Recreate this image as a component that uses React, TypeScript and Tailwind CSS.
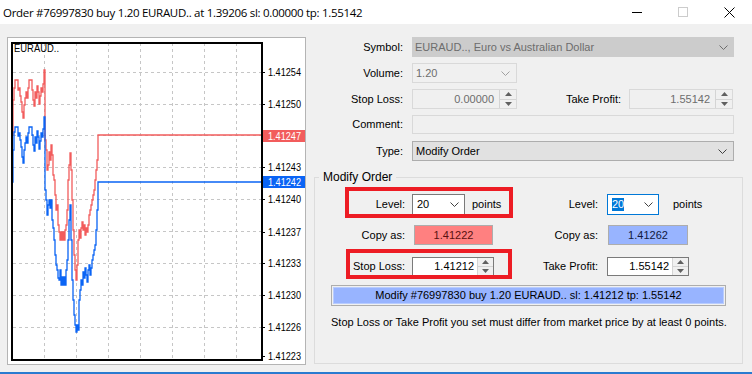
import React from "react";

type Pt = [number, number];

// tick data of the chart, in page pixels
const askTicks: Pt[] = [
  [12, 135], [13, 100], [14, 88], [15, 80], [17, 80], [18, 90], [19, 88], [20, 96], [21, 102], [22, 112],
  [23, 118], [24, 105], [25, 98], [26, 92], [27, 98], [28, 88], [29, 80], [31, 80], [32, 90], [33, 100],
  [34, 106], [35, 92], [36, 98], [37, 86], [38, 92], [39, 104], [40, 96], [41, 88], [42, 92], [43, 84],
  [44, 70], [45, 140], [46, 150], [47, 170], [48, 165], [49, 152], [50, 160], [51, 145], [52, 155], [53, 175],
  [54, 180], [55, 195], [56, 210], [57, 205], [58, 225], [59, 232], [60, 240], [61, 232], [62, 240], [63, 232],
  [64, 240], [65, 230], [66, 225], [67, 210], [68, 180], [69, 165], [70, 153], [71, 170], [72, 200], [73, 230],
  [74, 255], [75, 270], [76, 280], [77, 265], [78, 240], [79, 230], [80, 238], [81, 228], [82, 222], [83, 230],
  [84, 225], [85, 235], [86, 228], [87, 232], [88, 225], [89, 215], [90, 210], [91, 205], [92, 200], [93, 195],
  [94, 190], [95, 180], [96, 170], [97, 160], [98, 150], [98, 135], [262, 135],
];

const bidTicks: Pt[] = [
  [12, 182], [13, 150], [14, 132], [15, 127], [17, 127], [18, 136], [19, 133], [20, 140], [21, 147], [22, 157],
  [23, 163], [24, 150], [25, 143], [26, 137], [27, 143], [28, 133], [29, 127], [31, 127], [32, 135], [33, 145],
  [34, 151], [35, 137], [36, 143], [37, 131], [38, 137], [39, 149], [40, 141], [41, 133], [42, 137], [43, 129],
  [44, 117], [45, 190], [46, 200], [47, 215], [48, 205], [49, 200], [50, 208], [51, 200], [52, 220], [53, 228],
  [54, 240], [55, 255], [56, 265], [57, 270], [58, 278], [59, 280], [60, 270], [61, 285], [62, 277], [63, 285],
  [64, 277], [65, 285], [66, 270], [67, 260], [68, 240], [69, 220], [70, 205], [71, 240], [72, 280], [73, 300],
  [74, 315], [75, 325], [76, 332], [77, 325], [78, 330], [79, 300], [80, 290], [81, 280], [82, 285], [83, 272],
  [84, 278], [85, 268], [86, 275], [87, 282], [88, 270], [89, 265], [90, 275], [91, 268], [92, 260], [93, 255],
  [94, 250], [95, 245], [96, 230], [97, 210], [98, 195], [98, 182], [262, 182],
];

const stepPath = (pts: Pt[]) =>
  pts.map(([x, y], i) => (i === 0 ? `M${x} ${y}` : `H${x} V${y}`)).join(" ");

const vGrid = [44, 76, 108, 140, 172, 204, 236];
const hGrid = [72, 104, 135, 167, 199, 231, 263, 295, 327];
const axis: [string, number][] = [
  ["1.41254", 72], ["1.41250", 104], ["1.41243", 167], ["1.41240", 199], ["1.41237", 232],
  ["1.41233", 263], ["1.41230", 295], ["1.41226", 327], ["1.41223", 356],
];

const Chart = () => (
  <div className="w-[299px] h-[328px] border border-[#b4b4b4] bg-white">
    <svg width="297" height="326" viewBox="8 38 297 326" className="block" fontFamily="Liberation Sans, Arial, sans-serif">
      {vGrid.map((x) => (
        <line key={x} x1={x + 0.5} y1={43} x2={x + 0.5} y2={360} stroke="#c6c6c6" strokeDasharray="3 3" />
      ))}
      {hGrid.map((y) => (
        <line key={y} x1={13} y1={y + 0.5} x2={261} y2={y + 0.5} stroke="#c6c6c6" strokeDasharray="3 3" />
      ))}
      <path d={stepPath(askTicks)} fill="none" stroke="#f25c5c" strokeWidth="1.3" />
      <path d={stepPath(bidTicks)} fill="none" stroke="#0a64f5" strokeWidth="1.3" />
      <rect x="12" y="43" width="250" height="317" fill="none" stroke="#000" strokeWidth="2" />
      <text x="14" y="48" fontSize="11" dominantBaseline="central" fill="#000" textLength="45" lengthAdjust="spacingAndGlyphs">
        EURAUD..
      </text>
      {axis.map(([t, y]) => (
        <g key={t}>
          <line x1={262} y1={y + 0.5} x2={265} y2={y + 0.5} stroke="#000" />
          <text x="268" y={y} fontSize="10" dominantBaseline="central" fill="#000" textLength="33" lengthAdjust="spacingAndGlyphs">
            {t}
          </text>
        </g>
      ))}
      <rect x="263" y="130" width="42" height="12" fill="#f25c5c" />
      <text x="268" y="136" fontSize="10" dominantBaseline="central" fill="#fff" textLength="33" lengthAdjust="spacingAndGlyphs">
        1.41247
      </text>
      <rect x="263" y="176" width="42" height="12" fill="#0a64f5" />
      <text x="268" y="182" fontSize="10" dominantBaseline="central" fill="#fff" textLength="33" lengthAdjust="spacingAndGlyphs">
        1.41242
      </text>
    </svg>
  </div>
);

const Chevron = () => (
  <svg width="9" height="5" viewBox="0 0 9 5" className="shrink-0">
    <path d="M0.5 0.5L4.5 4.5L8.5 0.5" fill="none" stroke="currentColor" strokeWidth="1" />
  </svg>
);

const SpinButtons = ({ w = "w-[17px]" }: { w?: string }) => (
  <div className={`${w} h-full flex flex-col border-l border-[#d4d4d4] bg-[#f0f0f0]`}>
    <div className="flex-1 flex items-center justify-center border-b border-[#d4d4d4]">
      <svg width="7" height="4" viewBox="0 0 7 4"><path d="M0 4L3.5 0L7 4Z" fill="#606060" /></svg>
    </div>
    <div className="flex-1 flex items-center justify-center">
      <svg width="7" height="4" viewBox="0 0 7 4"><path d="M0 0L3.5 4L7 0Z" fill="#606060" /></svg>
    </div>
  </div>
);

const TitleBar = () => (
  <div className="h-[24px] bg-white flex items-center shrink-0">
    <span className="pl-[3px] text-[11.5px] font-['Open_Sans',sans-serif] tracking-[-0.3px]">
      Order #76997830 buy 1.20 EURAUD.. at 1.39206 sl: 0.00000 tp: 1.55142
    </span>
    <div className="ml-auto flex items-center h-full">
      <div className="w-[46px] h-full flex items-center justify-center">
        <div className="w-[10px] h-px bg-black" />
      </div>
      <div className="w-[46px] h-full flex items-center justify-center">
        <div className="w-[10px] h-[10px] border border-[#cccccc]" />
      </div>
      <div className="w-[46px] h-full flex items-center justify-center">
        <svg width="11" height="11" viewBox="0 0 11 11">
          <path d="M0.5 0.5L10.5 10.5M10.5 0.5L0.5 10.5" stroke="#000" strokeWidth="1" />
        </svg>
      </div>
    </div>
  </div>
);

export default function App() {
  return (
    <div className="w-[752px] h-[374px] bg-[#f0f0f0] flex flex-col overflow-hidden border-b-2 border-[#2a7bd0] font-['Liberation_Sans',Arial,sans-serif] text-[11px] leading-[13px] text-black">
      <TitleBar />
      <div className="flex flex-1">
        <div className="w-[310px] pl-[7px] pt-[13px] shrink-0">
          <Chart />
        </div>

        <div className="flex-1 pt-[13px]">
          {/* symbol */}
          <div className="flex items-center h-[20px]">
            <span className="w-[93px] text-right">Symbol:</span>
            <div className="ml-[9px] w-[322px] h-[20px] bg-[#cccccc] text-[#6d6d6d] flex items-center justify-between pl-[3px] pr-[6px]">
              EURAUD.., Euro vs Australian Dollar
              <Chevron />
            </div>
          </div>
          {/* volume */}
          <div className="flex items-center h-[20px] mt-[6px]">
            <span className="w-[93px] text-right">Volume:</span>
            <div className="ml-[9px] w-[105px] h-[20px] border border-[#d9d9d9] bg-[#f0f0f0] text-[#6d6d6d] flex items-center justify-between pl-[3px] pr-[6px]">
              1.20
              <span className="text-[#a0a0a0]"><Chevron /></span>
            </div>
          </div>
          {/* stop loss / take profit */}
          <div className="flex items-center h-[20px] mt-[6px]">
            <span className="w-[93px] text-right">Stop Loss:</span>
            <div className="ml-[9px] w-[105px] h-[20px] border border-[#d9d9d9] bg-[#f0f0f0] text-[#6d6d6d] flex">
              <span className="flex-1 flex items-center justify-end pr-[5px]">0.00000</span>
              <SpinButtons />
            </div>
            <span className="w-[104px] text-right">Take Profit:</span>
            <div className="ml-[8px] w-[104px] h-[20px] border border-[#d9d9d9] bg-[#f0f0f0] text-[#6d6d6d] flex">
              <span className="flex-1 flex items-center justify-end pr-[5px]">1.55142</span>
              <SpinButtons />
            </div>
          </div>
          {/* comment */}
          <div className="flex items-center h-[19px] mt-[6px]">
            <span className="w-[93px] text-right">Comment:</span>
            <div className="ml-[9px] w-[322px] h-[19px] border border-[#d9d9d9] bg-[#f0f0f0]" />
          </div>
          {/* type */}
          <div className="flex items-center h-[20px] mt-[7px]">
            <span className="w-[93px] text-right">Type:</span>
            <div className="ml-[9px] w-[322px] h-[20px] border border-[#adadad] bg-[#e1e1e1] flex items-center justify-between pl-[3px] pr-[6px]">
              Modify Order
              <span className="text-[#404040]"><Chevron /></span>
            </div>
          </div>

          {/* modify order group */}
          <fieldset className="mt-[10px] ml-[4px] w-[429px] h-[193px] border border-[#dcdcdc]">
            <legend className="ml-[4px] px-[4px] text-[12px] leading-[13px]">Modify Order</legend>
            <div className="relative mt-[10px]">
              {/* level */}
              <div className="flex items-center h-[21px]">
                <div className="w-[203px] flex items-center">
                  <span className="w-[90px] text-right">Level:</span>
                  <div className="ml-[7px] w-[53px] h-[21px] border border-[#7a7a7a] bg-white flex items-center justify-between pl-[4px] pr-[5px]">
                    20
                    <span className="text-[#404040]"><Chevron /></span>
                  </div>
                  <span className="ml-[7px]">points</span>
                </div>
                <span className="w-[80px] text-right">Level:</span>
                <div className="ml-[9px] w-[52px] h-[21px] border border-[#0078d7] bg-white flex items-center justify-between pl-[4px] pr-[5px]">
                  <span className="bg-[#0078d7] text-white">20</span>
                  <span className="text-[#404040]"><Chevron /></span>
                </div>
                <span className="ml-[14px]">points</span>
              </div>
              {/* copy as */}
              <div className="flex items-center h-[20px] mt-[10px]">
                <div className="w-[203px] flex items-center">
                  <span className="w-[90px] text-right">Copy as:</span>
                  <div className="ml-[9px] w-[79px] h-[20px] border border-[#adadad] bg-[#ff8080] flex items-center justify-center text-[#5a1010]">
                    1.41222
                  </div>
                </div>
                <span className="w-[80px] text-right">Copy as:</span>
                <div className="ml-[10px] w-[80px] h-[20px] border border-[#adadad] bg-[#98b4ff] flex items-center justify-center text-[#101840]">
                  1.41262
                </div>
              </div>
              {/* stop loss / take profit */}
              <div className="flex items-center h-[19px] mt-[12px]">
                <div className="w-[203px] flex items-center">
                  <span className="w-[90px] text-right">Stop Loss:</span>
                  <div className="ml-[7px] w-[82px] h-[19px] border border-[#7a7a7a] bg-white flex">
                    <span className="flex-1 flex items-center justify-end pr-[3px]">1.41212</span>
                    <SpinButtons w="w-[16px]" />
                  </div>
                </div>
                <span className="w-[80px] text-right">Take Profit:</span>
                <div className="ml-[9px] w-[82px] h-[19px] border border-[#7a7a7a] bg-white flex">
                  <span className="flex-1 flex items-center justify-end pr-[3px]">1.55142</span>
                  <SpinButtons w="w-[16px]" />
                </div>
              </div>
              {/* modify button */}
              <div className="ml-[16px] mt-[9px] w-[395px] h-[21px] border border-[#adadad] p-px">
                <div className="w-full h-full bg-[#98b4ff] border border-[#b8ccff] flex items-center justify-center">
                  Modify #76997830 buy 1.20 EURAUD.. sl: 1.41212 tp: 1.55142
                </div>
              </div>
              <p className="ml-[16px] mt-[10px]">
                Stop Loss or Take Profit you set must differ from market price by at least 0 points.
              </p>

              {/* highlight annotations */}
              <div className="absolute left-[30px] top-[-7px] w-[168px] h-[31px] border-4 border-[#ed1c24]" />
              <div className="absolute left-[31px] top-[55px] w-[166px] h-[30px] border-4 border-[#ed1c24]" />
            </div>
          </fieldset>
        </div>
      </div>
    </div>
  );
}
